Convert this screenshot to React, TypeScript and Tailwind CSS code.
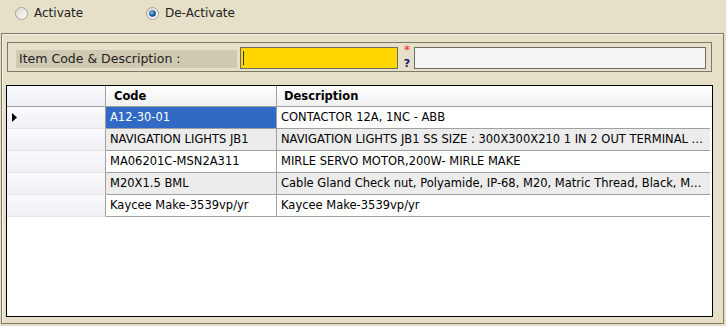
import React from 'react';

interface Row {
  code: string;
  description: string;
}

const ROWS: Row[] = [
  { code: 'A12-30-01', description: 'CONTACTOR 12A, 1NC - ABB' },
  { code: 'NAVIGATION LIGHTS JB1', description: 'NAVIGATION LIGHTS JB1 SS SIZE : 300X300X210 1 IN 2 OUT TERMINAL BOX WITH GLANDS' },
  { code: 'MA06201C-MSN2A311', description: 'MIRLE SERVO MOTOR,200W- MIRLE MAKE' },
  { code: 'M20X1.5 BML', description: 'Cable Gland Check nut, Polyamide, IP-68, M20, Matric Thread, Black, Make : Jacob' },
  { code: 'Kaycee Make-3539vp/yr', description: 'Kaycee Make-3539vp/yr' },
];

const Radio: React.FC<{ checked?: boolean; id: string }> = ({ checked, id }) => (
  <svg width="13" height="13" viewBox="0 0 13 13" className="shrink-0">
    <defs>
      <linearGradient id={`rf-${id}`} x1="0" y1="0" x2="1" y2="1">
        <stop offset="0" stopColor="#d8d6ce" />
        <stop offset="1" stopColor="#ffffff" />
      </linearGradient>
      <radialGradient id={`rd-${id}`} cx="0.4" cy="0.4" r="0.6">
        <stop offset="0" stopColor="#9fd2f5" />
        <stop offset="0.5" stopColor="#2a7ab8" />
        <stop offset="1" stopColor="#0f3f6e" />
      </radialGradient>
    </defs>
    <circle cx="6.5" cy="6.5" r="6" fill={`url(#rf-${id})`} stroke="#a5a39a" strokeWidth="1" />
    {checked && <circle cx="6.5" cy="6.5" r="3.3" fill={`url(#rd-${id})`} />}
  </svg>
);

export default function App() {
  return (
    <div
      className="w-[726px] h-[326px] bg-[#e6e0c8] text-black overflow-hidden"
      style={{ fontFamily: '"DejaVu Sans", Verdana, sans-serif' }}
    >
      {/* Status radios */}
      <div className="h-[33px] flex items-start pt-[7px] pl-[15px] text-[12px]">
        <label className="flex items-center gap-[6px] w-[131px] leading-[13px]">
          <Radio id="a" />
          <span className="text-[#222]">Activate</span>
        </label>
        <label className="flex items-center gap-[6px] leading-[13px]">
          <Radio id="b" checked />
          <span className="text-[#222]">De-Activate</span>
        </label>
      </div>

      {/* Outer group box */}
      <div className="ml-[1px] w-[723px] h-[291px] border border-[#7b7968] shadow-[inset_1px_1px_0_#f5f2e6]">
        {/* Search panel */}
        <div className="ml-[5px] mt-[8px] w-[705px] h-[30px] border border-[#7b7968] flex items-start">
          <div className="ml-[8px] mt-[7px] w-[221px] h-[18px] bg-[#d0cab3] pl-[3px] text-[12.5px] leading-[18px] text-[#222] whitespace-nowrap">
            Item Code &amp; Description :
          </div>
          <div className="ml-[3px] mt-[4px] w-[158px] h-[22px] border border-[#6c6c66] bg-[#ffd600] flex items-center pl-[2px]">
            <div className="w-px h-[14px] bg-[#333]" />
          </div>
          <div className="ml-[4px] w-[10px] flex flex-col items-center">
            <span className="block text-[12px] leading-[14px] text-[#ff1a1a]">*</span>
            <span className="block text-[11px] leading-[13px] text-[#101070] font-bold">?</span>
          </div>
          <div className="ml-[2px] mt-[4px] w-[292px] h-[22px] border border-[#6c6c66] bg-[#f6f3f6]" />
        </div>

        {/* Results grid */}
        <div className="ml-[4px] mt-[13px] w-[707px] h-[232px] border border-black bg-white overflow-hidden">
          <div className="flex h-[21px] border-b border-[#a0a0a0] bg-gradient-to-b from-white to-[#f0f0f0] text-[11.5px] font-bold">
            <div className="w-[99px] border-r border-[#a0a0a0] bg-gradient-to-b from-[#f8f9fd] to-[#eef0f6]" />
            <div className="w-[171px] border-r border-[#a0a0a0] pl-[8px] leading-[20px]">Code</div>
            <div className="flex-1 pl-[7px] leading-[20px]">Description</div>
          </div>
          {ROWS.map((row, i) => {
            const alt = i % 2 === 1;
            return (
              <div key={row.code} className="flex h-[22px] text-[11.5px] leading-[21px]">
                <div className="w-[99px] border-r border-b border-r-[#a0a0a0] border-b-[#e4e4ea] bg-gradient-to-b from-[#fafafd] to-[#f0f0f5] flex items-center pl-[5px]">
                  {i === 0 && (
                    <svg width="5" height="9" viewBox="0 0 5 9">
                      <path d="M0 0 L5 4.5 L0 9 Z" fill="#000" />
                    </svg>
                  )}
                </div>
                <div
                  className={`w-[171px] border-r border-b border-[#a0a0a0] pl-[4px] whitespace-nowrap overflow-hidden ${
                    i === 0 ? 'bg-[#316ac5] text-white' : alt ? 'bg-[#ececec]' : 'bg-white'
                  }`}
                >
                  {row.code}
                </div>
                <div
                  className={`w-[433px] border-b border-[#a0a0a0] pl-[4px] pr-[3px] whitespace-nowrap overflow-hidden text-ellipsis ${
                    alt ? 'bg-[#ececec]' : 'bg-white'
                  }`}
                >
                  {row.description}
                </div>
              </div>
            );
          })}
        </div>
      </div>
    </div>
  );
}
